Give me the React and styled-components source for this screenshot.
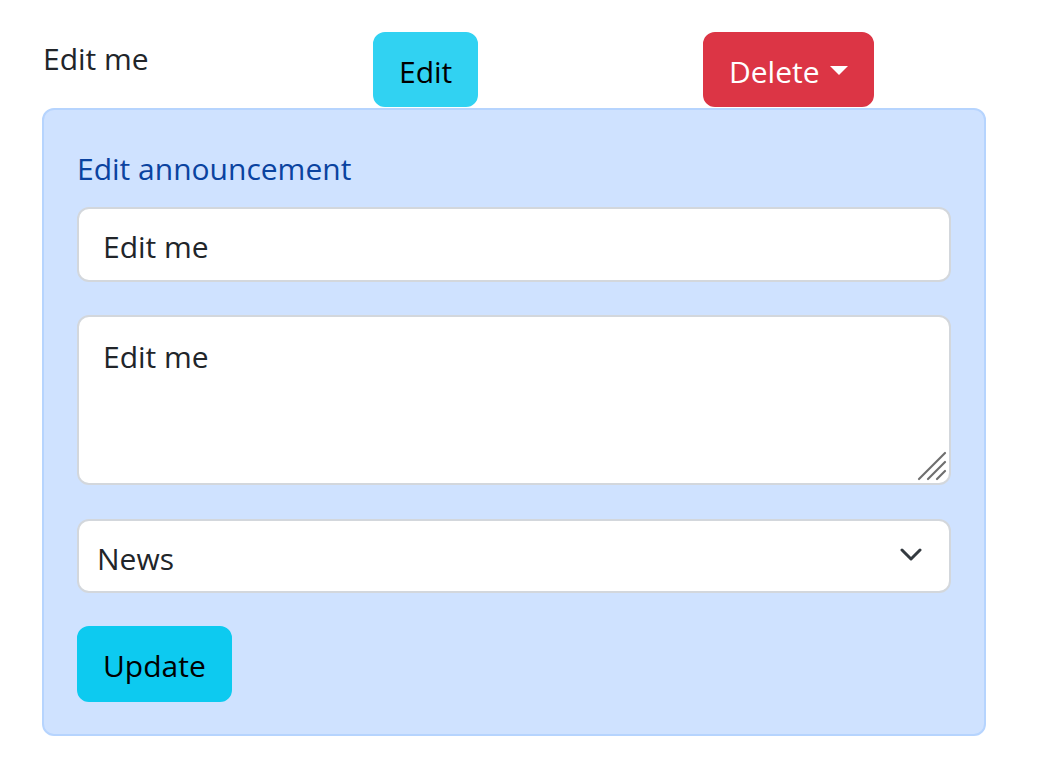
import React from "react";
import styled, { createGlobalStyle } from "styled-components";

const GlobalStyle = createGlobalStyle`
  body {
    margin: 0;
    background: #ffffff;
    font-family: "Open Sans", "Noto Sans", sans-serif;
    color: #212529;
  }
`;

const Page = styled.div`
  padding: 32px 0 0 42px;
  width: 944px;
`;

const TopRow = styled.div`
  display: grid;
  grid-template-columns: 331px 330px 283px;
  align-items: start;
`;

const Heading = styled.div`
  font-size: 30px;
  line-height: 54px;
  padding-left: 1px;
`;

const Button = styled.button`
  font-family: inherit;
  font-size: 30px;
  line-height: 44px;
  height: 75px;
  padding: 4px 24px 0;
  border: 2px solid ${p => p.$bg};
  border-radius: 12px;
  background: ${p => p.$bg};
  color: ${p => p.$fg};
  display: inline-flex;
  align-items: center;
  gap: 10px;
  cursor: pointer;
  justify-self: start;
`;

const Caret = styled.span`
  width: 0;
  height: 0;
  border-left: 9px solid transparent;
  border-right: 9px solid transparent;
  border-top: 9px solid #ffffff;
  margin-top: -2px;
`;

const Card = styled.form`
  margin-top: 1px;
  background: #cfe2ff;
  border: 2px solid #b6d4fe;
  border-radius: 12px;
  padding: 32px 33px 32px;
  display: flex;
  flex-direction: column;
  align-items: stretch;
`;

const Title = styled.div`
  color: #0a43a0;
  font-size: 30px;
  line-height: 50px;
  padding-top: 2px;
  margin-bottom: 13px;
`;

const fieldBase = `
  font-family: inherit;
  font-size: 30px;
  color: #212529;
  background: #ffffff;
  border: 2px solid #d3d7dc;
  border-radius: 12px;
  box-sizing: border-box;
  width: 100%;
  outline: none;
  display: block;
`;

const Input = styled.input`
  ${fieldBase}
  height: 75px;
  padding: 4px 24px 0;
  margin-bottom: 33px;
`;

const FieldWrap = styled.div`
  position: relative;
  margin-bottom: ${p => p.$gap}px;
`;

const TextArea = styled.textarea`
  ${fieldBase}
  height: 170px;
  padding: 14px 24px 10px;
  line-height: 52px;
  resize: none;
`;

const Grip = styled.svg`
  position: absolute;
  right: 4px;
  bottom: 4px;
  pointer-events: none;
`;

const Select = styled.select`
  ${fieldBase}
  height: 74px;
  padding: 4px 18px 0;
  appearance: none;
`;

const Chevron = styled.svg`
  position: absolute;
  right: 29px;
  top: 29px;
  pointer-events: none;
`;

const UpdateButton = styled(Button)`
  align-self: flex-start;
  height: 76px;
`;

export default function App() {
  return (
    <>
      <GlobalStyle />
      <Page>
        <TopRow>
          <Heading>Edit me</Heading>
          <Button type="button" $bg="#31d2f2" $fg="#000000">
            Edit
          </Button>
          <Button type="button" $bg="#dc3545" $fg="#ffffff">
            Delete
            <Caret />
          </Button>
        </TopRow>
        <Card onSubmit={e => e.preventDefault()}>
          <Title>Edit announcement</Title>
          <Input defaultValue="Edit me" />
          <FieldWrap $gap={34}>
            <TextArea defaultValue="Edit me" />
            <Grip width="30" height="30" viewBox="0 0 30 30">
              <g stroke="#6e6e6e" strokeWidth="2.2" strokeLinecap="round">
                <path d="M2 28L28 2" />
                <path d="M11 28L28 11" />
                <path d="M20 28L28 20" />
              </g>
            </Grip>
          </FieldWrap>
          <FieldWrap $gap={33}>
            <Select defaultValue="news">
              <option value="news">News</option>
              <option value="event">Event</option>
            </Select>
            <Chevron width="22" height="14" viewBox="0 0 22 14">
              <path
                d="M2 2l9 9 9-9"
                fill="none"
                stroke="#343a40"
                strokeWidth="3"
                strokeLinecap="round"
                strokeLinejoin="round"
              />
            </Chevron>
          </FieldWrap>
          <UpdateButton type="submit" $bg="#0dcaf0" $fg="#000000">
            Update
          </UpdateButton>
        </Card>
      </Page>
    </>
  );
}
